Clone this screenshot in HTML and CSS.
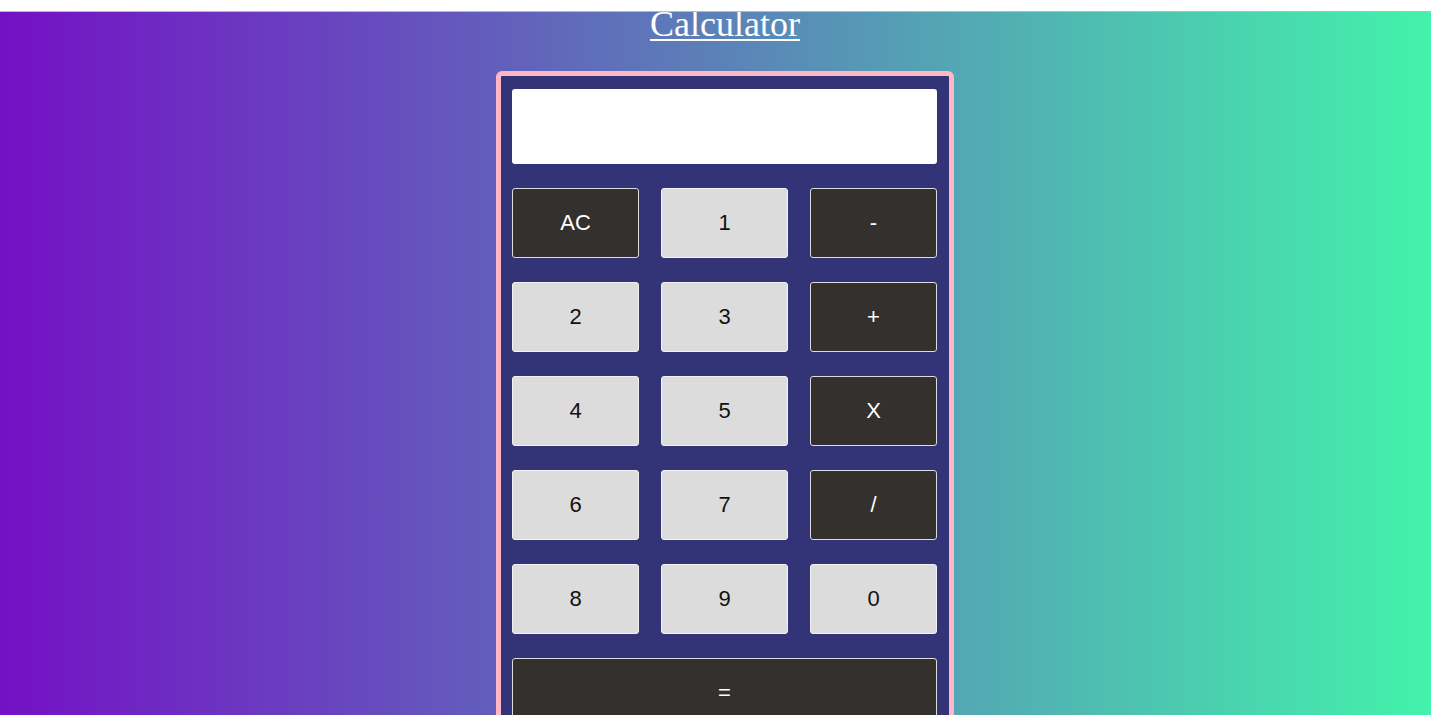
FILE: index.html
```html
<!DOCTYPE html>
<html lang="en">
<head>
<meta charset="utf-8">
<title>Calculator</title>
<link rel="stylesheet" href="styles.css">
</head>
<body>
<div class="topstrip"></div>
<main class="page">
  <h1 class="title">Calculator</h1>
  <div class="calculator">
    <div class="keys">
      <div class="display"></div>
      <button class="key dark">AC</button>
      <button class="key light">1</button>
      <button class="key dark">-</button>
      <button class="key light">2</button>
      <button class="key light">3</button>
      <button class="key dark">+</button>
      <button class="key light">4</button>
      <button class="key light">5</button>
      <button class="key dark">X</button>
      <button class="key light">6</button>
      <button class="key light">7</button>
      <button class="key dark">/</button>
      <button class="key light">8</button>
      <button class="key light">9</button>
      <button class="key light">0</button>
      <button class="key dark wide">=</button>
    </div>
  </div>
</main>
</body>
</html>
```

FILE: styles.css
```css
html, body {
  margin: 0;
  padding: 0;
  height: 100%;
  overflow: hidden;
}

body {
  background: linear-gradient(to right, #7410c5, #43f2ab);
  font-family: "Liberation Serif", "Times New Roman", serif;
  position: relative;
}

.topstrip {
  position: absolute;
  top: 0;
  left: 0;
  right: 0;
  height: 11px;
  background: #ffffff;
  border-bottom: 1px solid #b9b9b9;
}

.page {
  padding-left: 19px;
  padding-top: 4px;
  display: flex;
  flex-direction: column;
  align-items: center;
}

.title {
  margin: 0;
  font-size: 36px;
  font-weight: normal;
  color: #ffffff;
  text-decoration: underline;
  text-decoration-thickness: 2px;
  text-underline-offset: 3px;
  line-height: 41px;
}

.calculator {
  margin-top: 26px;
  width: 425px;
  padding: 13px 12px 20px 11px;
  background: #333378;
  border: 5px solid #ffb7c5;
  border-radius: 6px;
}

.keys {
  display: grid;
  grid-template-columns: repeat(3, 1fr);
  column-gap: 22px;
  row-gap: 24px;
}

.display {
  grid-column: 1 / span 3;
  height: 75px;
  background: #ffffff;
  border-radius: 3px;
}

.key {
  height: 70px;
  border: 1px solid #dcdcdc;
  border-radius: 3px;
  font-family: "Liberation Sans", Arial, sans-serif;
  font-size: 22px;
  padding: 0;
  margin: 0;
}

.dark {
  background: #33302e;
  color: #ffffff;
}

.light {
  background: #dcdcdc;
  color: #111111;
  border-color: #f2f2f2;
}

.wide {
  grid-column: 1 / span 3;
}
```
